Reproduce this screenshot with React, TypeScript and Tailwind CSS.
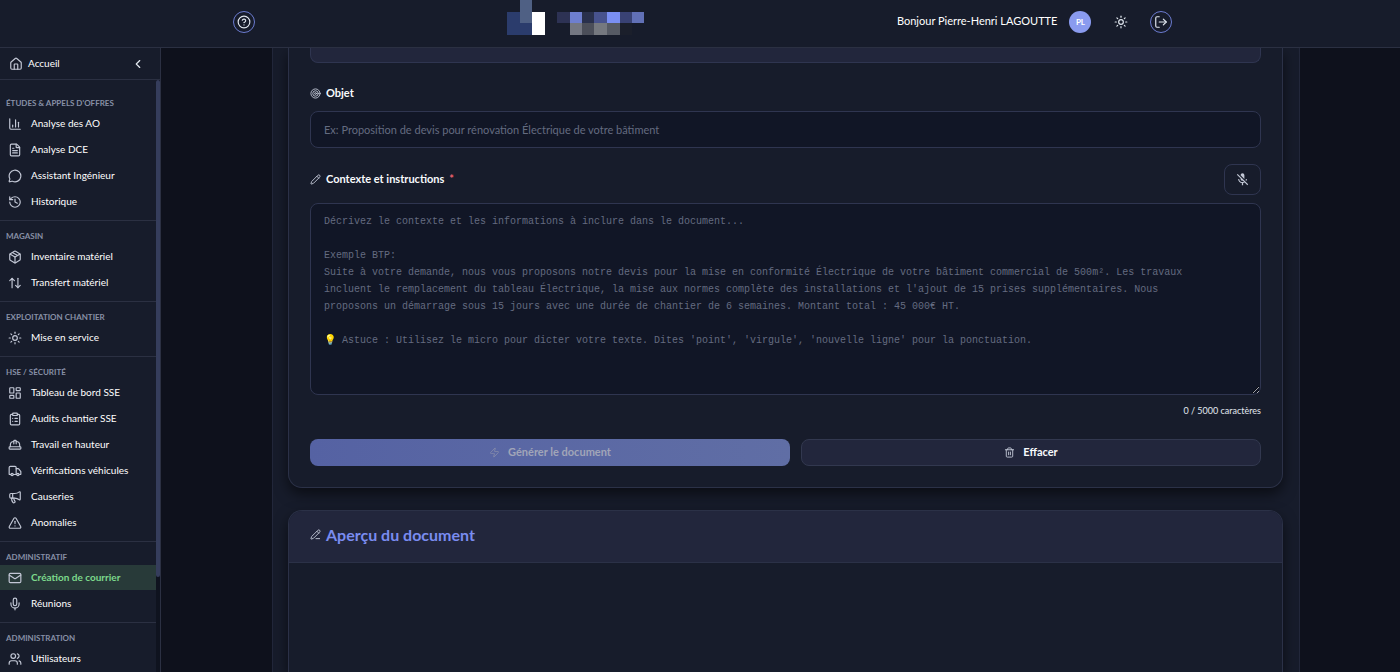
import React, { useState } from 'react';
import {
  House,
  ChevronLeft,
  ChartColumn,
  FileText,
  MessageCircle,
  History,
  Package,
  ArrowUpDown,
  Sun,
  LayoutDashboard,
  ClipboardList,
  HardHat,
  Truck,
  Megaphone,
  TriangleAlert,
  Mail,
  Mic,
  Users,
  CircleQuestionMark,
  LogOut,
  Target,
  Pencil,
  PencilLine,
  Zap,
  Trash2,
} from 'lucide-react';
import { MdMicOff } from 'react-icons/md';

const MAX_LENGTH = 5000;

const sections = [
  {
    title: "Études & appels d'offres",
    items: [
      { icon: ChartColumn, label: 'Analyse des AO' },
      { icon: FileText, label: 'Analyse DCE' },
      { icon: MessageCircle, label: 'Assistant Ingénieur' },
      { icon: History, label: 'Historique' },
    ],
  },
  {
    title: 'Magasin',
    items: [
      { icon: Package, label: 'Inventaire matériel' },
      { icon: ArrowUpDown, label: 'Transfert matériel' },
    ],
  },
  {
    title: 'Exploitation chantier',
    items: [{ icon: Sun, label: 'Mise en service' }],
  },
  {
    title: 'HSE / Sécurité',
    items: [
      { icon: LayoutDashboard, label: 'Tableau de bord SSE' },
      { icon: ClipboardList, label: 'Audits chantier SSE' },
      { icon: HardHat, label: 'Travail en hauteur' },
      { icon: Truck, label: 'Vérifications véhicules' },
      { icon: Megaphone, label: 'Causeries' },
      { icon: TriangleAlert, label: 'Anomalies' },
    ],
  },
  {
    title: 'Administratif',
    items: [
      { icon: Mail, label: 'Création de courrier' },
      { icon: Mic, label: 'Réunions' },
    ],
  },
  {
    title: 'Administration',
    items: [{ icon: Users, label: 'Utilisateurs' }],
  },
];

const contextPlaceholder = `Décrivez le contexte et les informations à inclure dans le document...

Exemple BTP:
Suite à votre demande, nous vous proposons notre devis pour la mise en conformité Électrique de votre bâtiment commercial de 500m². Les travaux
incluent le remplacement du tableau Électrique, la mise aux normes complète des installations et l'ajout de 15 prises supplémentaires. Nous
proposons un démarrage sous 15 jours avec une durée de chantier de 6 semaines. Montant total : 45 000€ HT.

💡 Astuce : Utilisez le micro pour dicter votre texte. Dites 'point', 'virgule', 'nouvelle ligne' pour la ponctuation.`;

const Logo: React.FC = () => (
  <svg width="138" height="35" viewBox="0 0 138 35" shapeRendering="crispEdges" role="img" aria-label="Logo">
    <rect x="0" y="12" width="25" height="23" fill="#2b3c6c" />
    <rect x="13" y="0" width="12" height="23" fill="#4f6084" />
    <rect x="25" y="12" width="13" height="23" fill="#ffffff" />
    <rect x="50" y="12" width="13" height="11" fill="#2d3254" />
    <rect x="63" y="12" width="12" height="11" fill="#6e7fcf" />
    <rect x="75" y="12" width="12" height="11" fill="#29304c" />
    <rect x="87" y="12" width="13" height="11" fill="#47528d" />
    <rect x="100" y="12" width="13" height="11" fill="#7a8ff3" />
    <rect x="113" y="12" width="12" height="11" fill="#394274" />
    <rect x="125" y="12" width="12" height="11" fill="#6170b6" />
    <rect x="63" y="23" width="12" height="12" fill="#747782" />
    <rect x="75" y="23" width="12" height="12" fill="#4b4e59" />
    <rect x="87" y="23" width="13" height="12" fill="#75787f" />
    <rect x="100" y="23" width="13" height="12" fill="#565a64" />
    <rect x="113" y="23" width="12" height="12" fill="#1b1f2b" />
  </svg>
);

const Header: React.FC = () => (
  <header className="shrink-0 h-12 bg-[#171c2b] border-b border-[#2b3042] pl-[5px]">
    <div className="max-w-[940px] h-full mx-auto flex items-center justify-between pb-1">
      <button
        aria-label="Aide"
        className="w-[22px] h-[22px] rounded-full border border-[#6b7bd0] flex items-center justify-center text-slate-200"
      >
        <CircleQuestionMark size={14} />
      </button>
      <a href="#accueil" className="self-start">
        <Logo />
      </a>
      <div className="flex items-center">
        <span className="text-[11px] text-white">Bonjour Pierre-Henri LAGOUTTE</span>
        <div className="ml-3 w-[22px] h-[22px] rounded-full bg-[#8a9bef] flex items-center justify-center text-[8px] font-bold text-white">
          PL
        </div>
        <button aria-label="Thème clair" className="ml-[23px] text-slate-200">
          <Sun size={14} />
        </button>
        <button
          aria-label="Déconnexion"
          className="ml-[22px] w-[22px] h-[22px] rounded-full border border-[#6b7bd0] flex items-center justify-center text-slate-200"
        >
          <LogOut size={14} />
        </button>
      </div>
    </div>
  </header>
);

const NavItem: React.FC<{ icon: any; label: string; active: boolean; onClick: () => void }> = ({
  icon: Icon,
  label,
  active,
  onClick,
}) => (
  <a
    href="#nav"
    onClick={onClick}
    className={`h-[25px] flex items-center gap-[9px] pl-2 text-[10px] whitespace-nowrap ${
      active ? 'bg-[#283a39] text-[#7dd98c] font-bold' : 'text-white'
    }`}
  >
    <Icon size={14} className="shrink-0 text-[#c3c8d6]" />
    <span>{label}</span>
  </a>
);

const Sidebar: React.FC = () => {
  const [current, setCurrent] = useState('Création de courrier');

  return (
    <aside className="shrink-0 w-[161px] flex flex-col bg-[#171c2b] border-r border-[#2b3042]">
      <div className="shrink-0 h-8 flex items-center justify-between pl-[9px] pr-[15px] border-b border-[#2b3042]">
        <a href="#accueil" className="flex items-center gap-[5px] text-[10px] text-white">
          <House size={14} className="text-[#c3c8d6]" />
          Accueil
        </a>
        <button aria-label="Réduire le menu" className="text-slate-200">
          <ChevronLeft size={14} />
        </button>
      </div>
      <div className="flex-1 min-h-0 flex">
        <nav className="flex-1 min-w-0 overflow-hidden pt-2">
          {sections.map((section) => (
            <div key={section.title} className="border-b border-[#2b3042] pb-[6px]">
              <h2 className="h-[23px] pt-[6px] pl-[6px] flex items-center text-[8px] font-bold uppercase text-[#8790a6] whitespace-nowrap">
                {section.title}
              </h2>
              <div className="flex flex-col gap-px">
                {section.items.map((item) => (
                  <NavItem
                    key={item.label}
                    icon={item.icon}
                    label={item.label}
                    active={item.label === current}
                    onClick={() => setCurrent(item.label)}
                  />
                ))}
              </div>
            </div>
          ))}
        </nav>
        <div className="w-1 bg-[#0f131f]">
          <div className="h-[84%] rounded-sm bg-[#353d5c]" />
        </div>
      </div>
    </aside>
  );
};

const LetterForm: React.FC = () => {
  const [subject, setSubject] = useState('');
  const [context, setContext] = useState('');

  const handleClear = () => {
    setSubject('');
    setContext('');
  };

  return (
    <form className="px-[21px] pb-[21px] bg-[#171c2b] border border-t-0 border-[#2b3147] rounded-b-[14px] shadow-[0_6px_14px_rgba(0,0,0,0.55)]">
      <div className="h-[15px] bg-[#22263c] border border-t-0 border-[#2f3550] rounded-b-lg" />

      <label htmlFor="objet" className="mt-[22px] h-4 flex items-center gap-[5px] text-[11px] font-bold text-slate-50">
        <Target size={11} className="text-[#c3c8d6]" />
        Objet
      </label>
      <input
        id="objet"
        type="text"
        value={subject}
        onChange={(e) => setSubject(e.target.value)}
        placeholder="Ex: Proposition de devis pour rénovation Électrique de votre bâtiment"
        className="mt-[10px] w-full h-[37px] px-[13px] rounded-lg bg-[#111626] border border-[#2f3550] text-[11px] text-slate-100 placeholder:text-[#646b80] outline-none"
      />

      <div className="mt-4 flex items-center justify-between">
        <label htmlFor="contexte" className="flex items-center gap-[5px] text-[11px] font-bold text-slate-50">
          <Pencil size={11} className="text-[#c3c8d6]" />
          Contexte et instructions
          <span className="text-[#f0616d]">*</span>
        </label>
        <button
          type="button"
          aria-label="Dicter le texte"
          className="w-[37px] h-[31px] rounded-lg border border-[#2f3550] flex items-center justify-center text-[#c3c8d6]"
        >
          <MdMicOff size={15} />
        </button>
      </div>
      <textarea
        id="contexte"
        maxLength={MAX_LENGTH}
        value={context}
        onChange={(e) => setContext(e.target.value)}
        placeholder={contextPlaceholder}
        className="mt-2 block w-full h-48 px-[13px] py-[9px] rounded-lg bg-[#111626] border border-[#2f3550] font-['Liberation_Mono',monospace] text-[10px] leading-[17px] text-slate-100 placeholder:text-[#646b80] outline-none resize-y"
      />
      <p className="mt-2 text-right text-[9px] leading-4 text-slate-200">
        {context.length} / {MAX_LENGTH} caractères
      </p>

      <div className="mt-5 flex gap-[11px]">
        <button
          type="button"
          disabled
          className="grow-[480] basis-0 h-[27px] rounded-lg bg-linear-to-r from-[#5562a3] to-[#606ea5] flex items-center justify-center gap-2 text-[11px] font-bold text-[#a1a5b8]"
        >
          <Zap size={11} className="text-[#8289ab]" />
          Générer le document
        </button>
        <button
          type="button"
          onClick={handleClear}
          className="grow-[458] basis-0 h-[27px] rounded-lg bg-[#22263c] border border-[#32384f] flex items-center justify-center gap-2 text-[11px] font-bold text-slate-50"
        >
          <Trash2 size={11} className="text-[#c3c8d6]" />
          Effacer
        </button>
      </div>
    </form>
  );
};

const Preview: React.FC = () => (
  <section className="flex-1 mt-[22px] bg-[#171c2b] border border-b-0 border-[#2b3147] rounded-t-[14px] overflow-hidden shadow-[0_6px_14px_rgba(0,0,0,0.55)]">
    <div className="h-[52px] px-[21px] pb-1 flex items-center gap-[5px] bg-[#22263c] border-b border-[#2b3147]">
      <PencilLine size={11} className="text-[#c3c8d6]" />
      <h2 className="text-base font-bold text-[#7a8cf0]">Aperçu du document</h2>
    </div>
  </section>
);

export default function App() {
  return (
    <div className="h-screen flex flex-col bg-[#0e111c] font-[Lato,sans-serif]">
      <Header />
      <div className="flex-1 min-h-0 flex">
        <Sidebar />
        <main className="flex-1 min-w-0 pl-[11px] overflow-hidden">
          <div className="max-w-[1028px] h-full mx-auto pl-[15px] pr-4 flex flex-col bg-[#171c2b] border-x border-[#22273a]">
            <LetterForm />
            <Preview />
          </div>
        </main>
      </div>
    </div>
  );
}
